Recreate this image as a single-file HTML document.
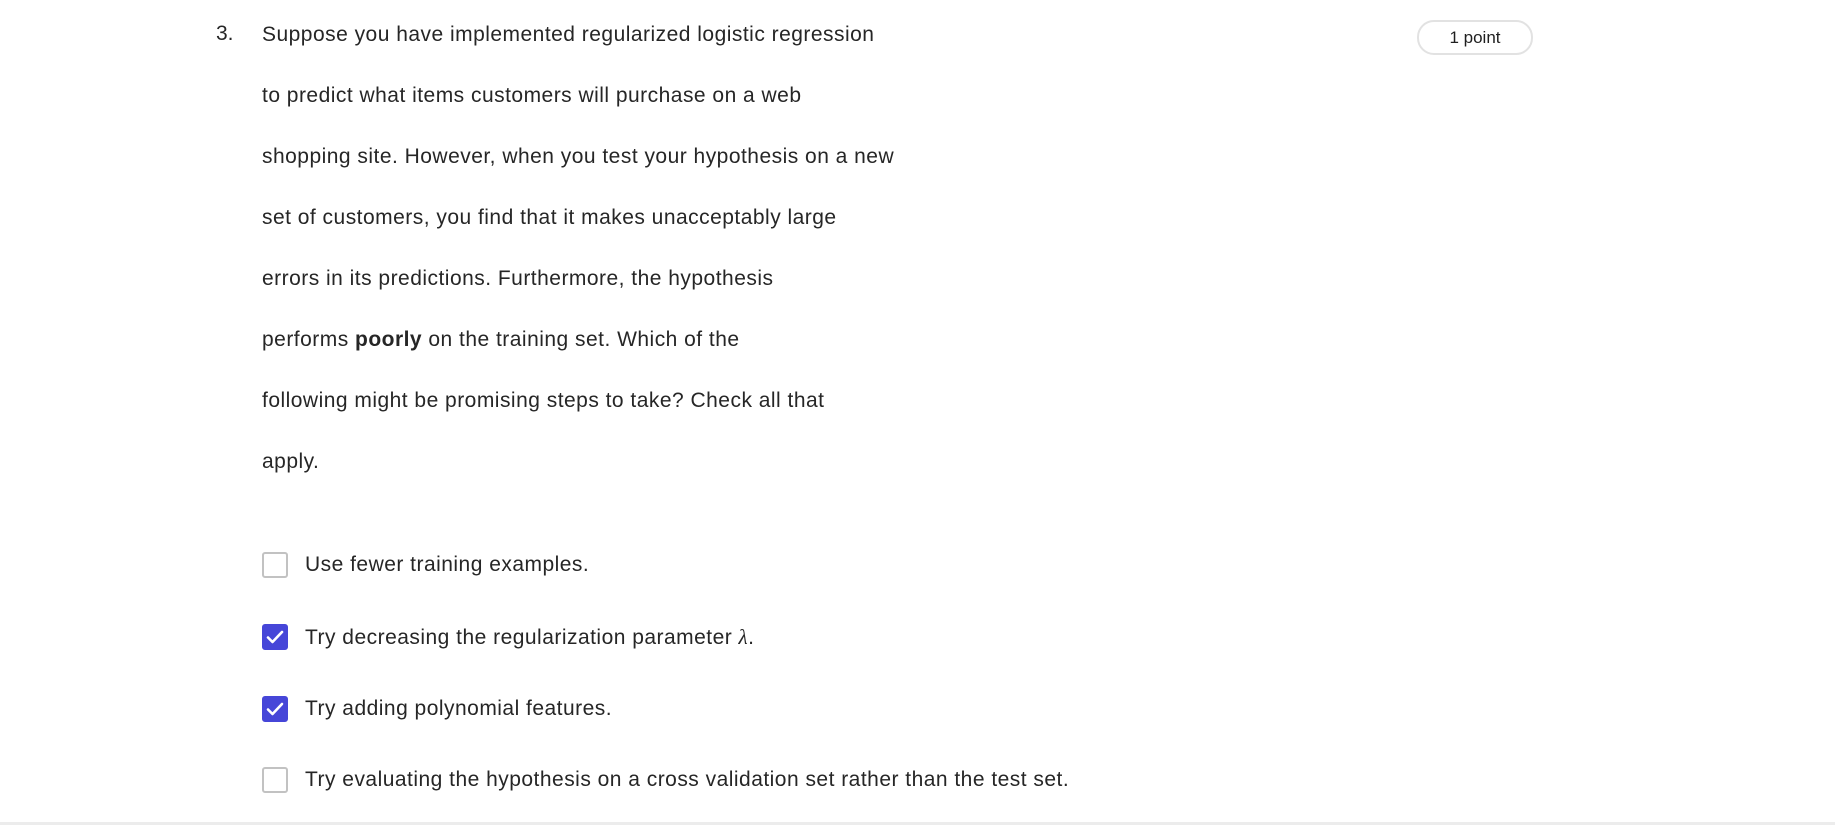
<!DOCTYPE html>
<html><head><meta charset="utf-8"><style>
html,body{margin:0;padding:0;background:#fff;width:1835px;height:825px;overflow:hidden;position:relative;font-family:"Liberation Sans",sans-serif;color:#262626}
.num{position:absolute;left:216px;top:20px;font-size:21px;line-height:28px}
.q{position:absolute;left:262px;top:20px;width:900px;font-size:21px;line-height:61px;margin-top:-16px;letter-spacing:0.48px}
.pill{position:absolute;left:1417px;top:20px;width:112px;height:31px;border:2px solid #e2e2e2;border-radius:17px;font-size:17px;line-height:31px;text-align:center;color:#1f1f1f}
.opt{position:absolute;left:262px;height:26px;font-size:21px;line-height:26px;letter-spacing:0.48px}
.box{position:absolute;left:0;top:0;width:22px;height:22px;border:2px solid #c2c2c2;border-radius:3px;background:#fff}
.box.on{background:#4646d8;border-color:#4646d8}
.opt span{position:absolute;left:43px;top:0;white-space:nowrap}
.bar{position:absolute;left:0;top:822px;width:1835px;height:3px;background:#ececec}
</style></head><body>
<div class="num">3.</div>
<div class="q">Suppose you have implemented regularized logistic regression<br>to predict what items customers will purchase on a web<br>shopping site. However, when you test your hypothesis on a new<br>set of customers, you find that it makes unacceptably large<br>errors in its predictions. Furthermore, the hypothesis<br>performs <b>poorly</b> on the training set. Which of the<br>following might be promising steps to take? Check all that<br>apply.</div>
<div class="pill">1 point</div>
<div class="opt" style="top:552px"><div class="box"></div><span>Use fewer training examples.</span></div>
<div class="opt" style="top:624px"><div class="box on"><svg width="22" height="22" viewBox="0 0 22 22"><path d="M4 11.5l4.5 4.5L18 6" stroke="#fff" stroke-width="2.6" fill="none" stroke-linecap="round" stroke-linejoin="round"/></svg></div><span>Try decreasing the regularization parameter <i style="font-family:'Liberation Serif',serif">λ</i>.</span></div>
<div class="opt" style="top:696px"><div class="box on"><svg width="22" height="22" viewBox="0 0 22 22"><path d="M4 11.5l4.5 4.5L18 6" stroke="#fff" stroke-width="2.6" fill="none" stroke-linecap="round" stroke-linejoin="round"/></svg></div><span>Try adding polynomial features.</span></div>
<div class="opt" style="top:767px"><div class="box"></div><span>Try evaluating the hypothesis on a cross validation set rather than the test set.</span></div>
<div class="bar"></div>
</body></html>
